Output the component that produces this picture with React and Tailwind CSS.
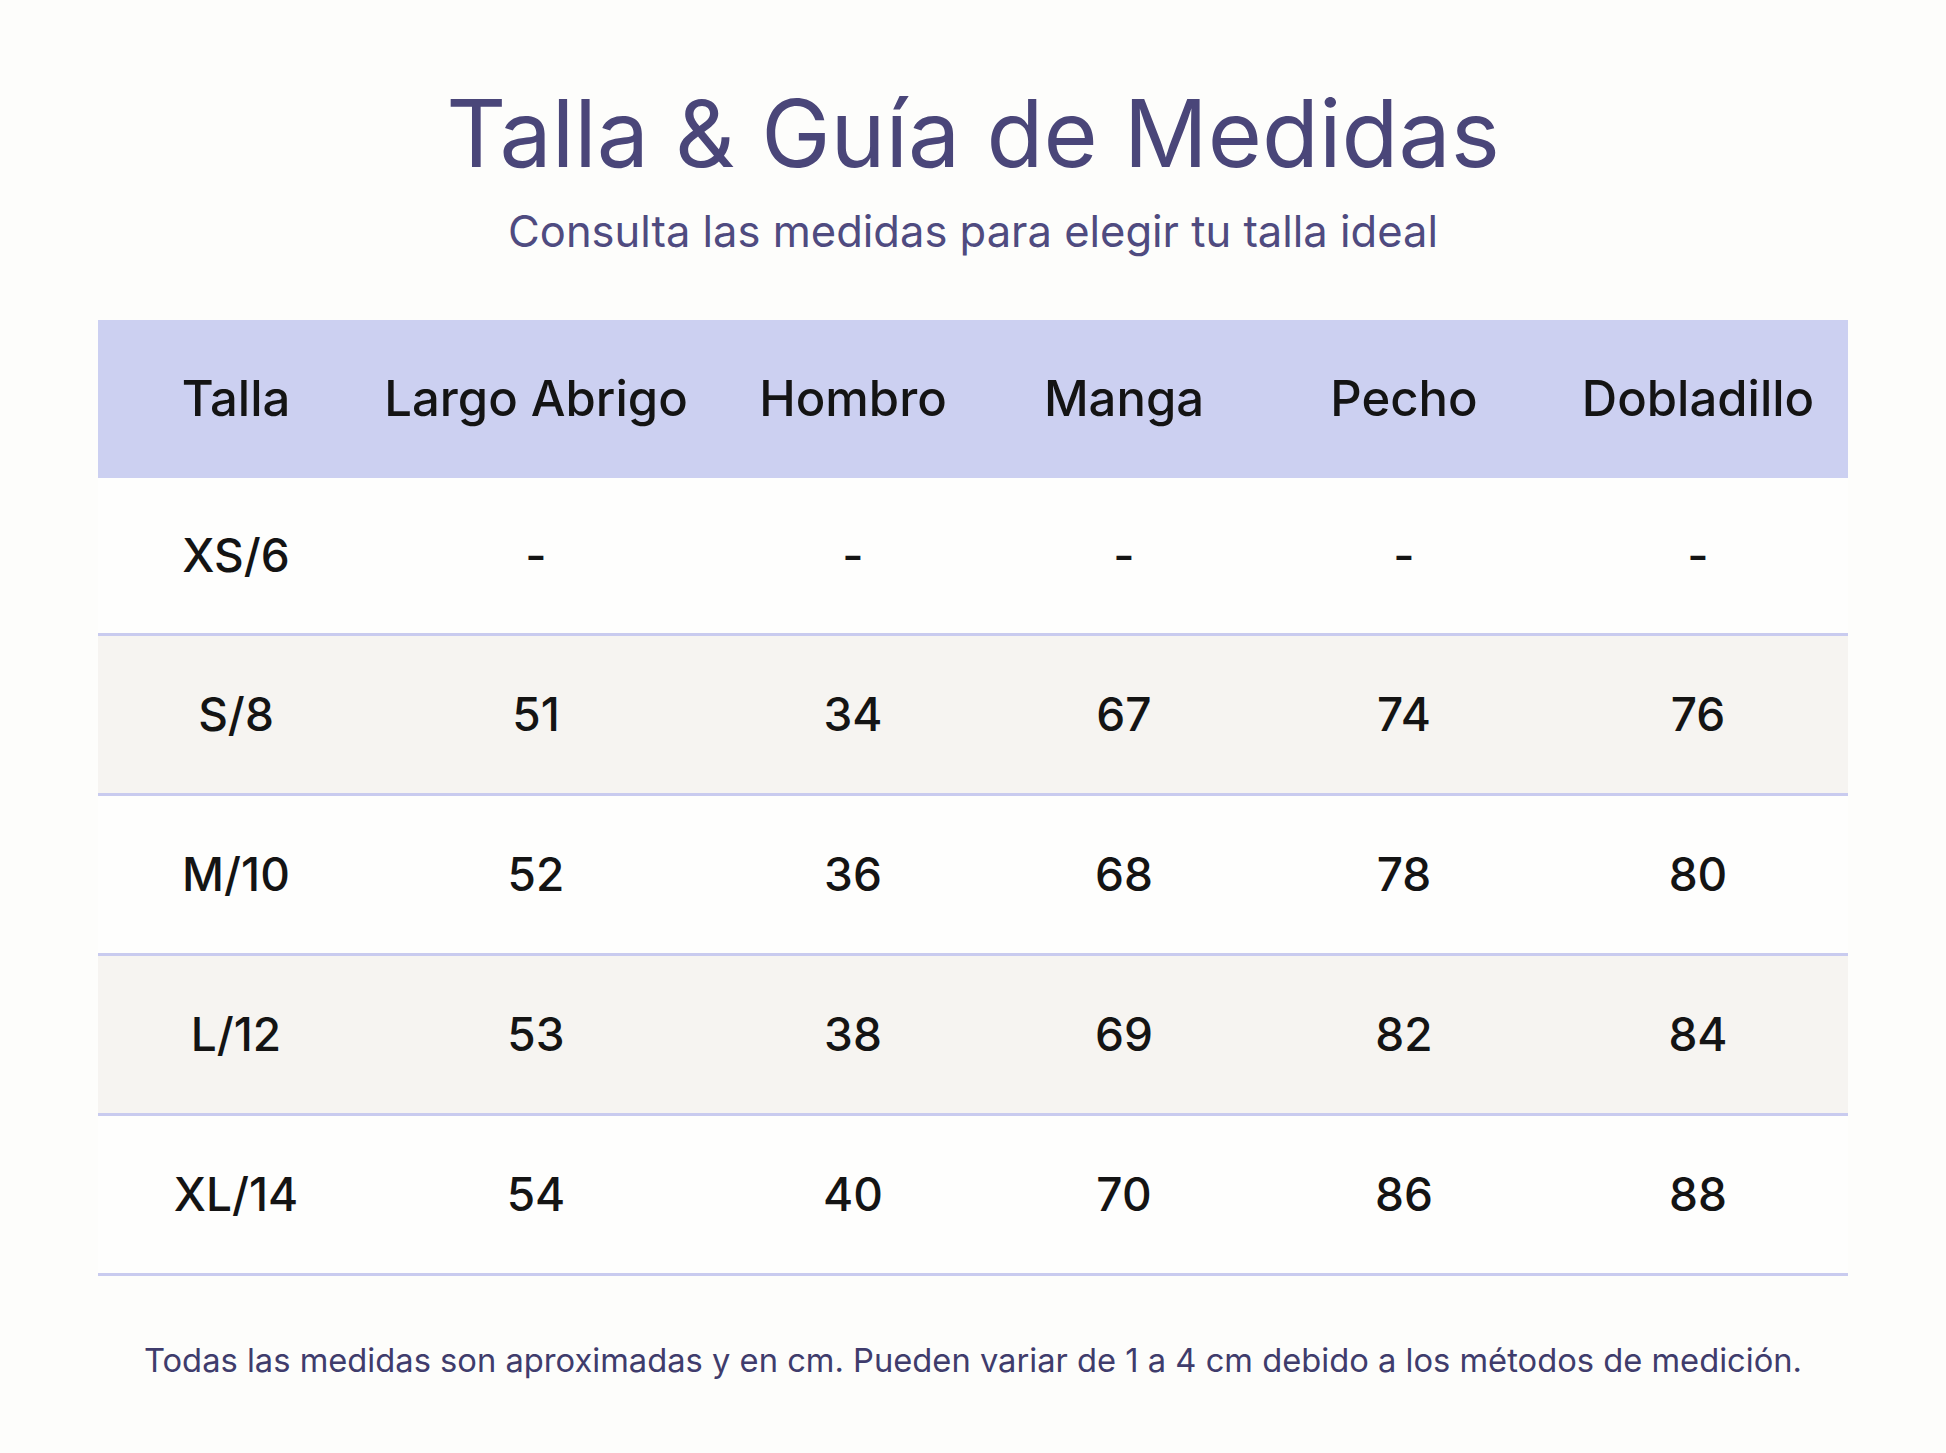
const columns = ["Talla", "Largo Abrigo", "Hombro", "Manga", "Pecho", "Dobladillo"]

const rows = [
  ["XS/6", "-", "-", "-", "-", "-"],
  ["S/8", "51", "34", "67", "74", "76"],
  ["M/10", "52", "36", "68", "78", "80"],
  ["L/12", "53", "38", "69", "82", "84"],
  ["XL/14", "54", "40", "70", "86", "88"],
]

const grid = "grid grid-cols-[276px_324px_310px_232px_328px_260px]"

const App = () => {
  return (
    <div
      className="min-h-[1453px] w-full bg-[#fdfdfb] flex flex-col items-center pt-[87px]"
      style={{ fontFamily: "Inter, 'Noto Sans', sans-serif" }}
    >
      <h1 className="text-[93px] leading-none text-[#4a4679]">Talla &amp; Guía de Medidas</h1>
      <p className="mt-[30px] text-[43.5px] leading-none text-[#4f4b80]">Consulta las medidas para elegir tu talla ideal</p>

      <div className="mt-[66px] w-[1750px]">
        <div className={`${grid} h-[158px] bg-[#ccd0f1] items-center`}>
          {columns.map((c) => (
            <div key={c} className="text-center text-[49px] font-medium text-[#141414]">{c}</div>
          ))}
        </div>

        {rows.map((r, i) => (
          <div
            key={r[0]}
            className={`${grid} ${i === 0 ? "h-[158px]" : "h-[160px]"} items-center border-b-[3px] border-[#c9cbef] ${i % 2 === 1 ? "bg-[#f6f4f1]" : "bg-[#fefefd]"}`}
          >
            {r.map((v, j) => (
              <div key={j} className="text-center text-[46px] font-medium text-[#141414]">{v}</div>
            ))}
          </div>
        ))}
      </div>

      <p className="mt-[68px] text-[32.7px] leading-none text-[#3f3c6c]">
        Todas las medidas son aproximadas y en cm. Pueden variar de 1 a 4 cm debido a los métodos de medición.
      </p>
    </div>
  )
}

export default App
